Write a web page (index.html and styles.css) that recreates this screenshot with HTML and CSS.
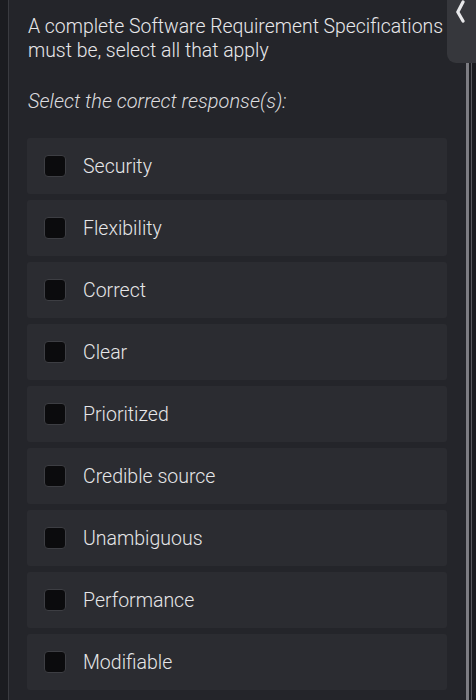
FILE: index.html
```html
<!DOCTYPE html>
<html>
<head>
<meta charset="utf-8">
<link rel="stylesheet" href="styles.css">
</head>
<body>
<div class="screen">
  <div class="edge-left"></div>
  <main class="panel">
    <p class="question">A complete Software Requirement Specifications must be, select all that apply</p>
    <p class="prompt">Select the correct response(s):</p>
    <ul class="options">
      <li class="option"><span class="box"></span><span class="label">Security</span></li>
      <li class="option"><span class="box"></span><span class="label">Flexibility</span></li>
      <li class="option"><span class="box"></span><span class="label">Correct</span></li>
      <li class="option"><span class="box"></span><span class="label">Clear</span></li>
      <li class="option"><span class="box"></span><span class="label">Prioritized</span></li>
      <li class="option"><span class="box"></span><span class="label">Credible source</span></li>
      <li class="option"><span class="box"></span><span class="label">Unambiguous</span></li>
      <li class="option"><span class="box"></span><span class="label">Performance</span></li>
      <li class="option"><span class="box"></span><span class="label">Modifiable</span></li>
    </ul>
  </main>
  <div class="edge-right">
    <div class="stripe-a"></div>
    <div class="stripe-gap"></div>
    <div class="stripe-b"></div>
  </div>
  <div class="tab">
    <svg class="chev" width="12" height="24" viewBox="0 0 12 24"><path d="M9 2 L3.8 12 L9 21" fill="none" stroke="#e8e8ea" stroke-width="3.2" stroke-linecap="round" stroke-linejoin="round"/></svg>
  </div>
</div>
</body>
</html>
```
FILE: styles.css
```css
* { box-sizing: border-box; }
html, body { margin: 0; padding: 0; }
body {
  width: 476px;
  height: 700px;
  overflow: hidden;
  background: #1a1b1f;
  font-family: Roboto, "Liberation Sans", sans-serif;
}
.screen {
  position: relative;
  display: flex;
  width: 476px;
  height: 700px;
}
.edge-left {
  width: 9px;
  flex: none;
  background: #1b1c20;
  border-right: 1px solid #3a3b40;
}
.panel {
  flex: 1;
  background: #24252a;
  padding: 15px 19px 0 18px;
}
.question {
  margin: 0 0 0 1px;
  font-size: 19.4px;
  font-weight: 300;
  line-height: 24px;
  color: #e8e8ea;
}
.prompt {
  margin: 26px 0 0 1px;
  font-size: 20px;
  font-weight: 300;
  line-height: 24px;
  font-style: italic;
  color: #dcdcdf;
}
.options {
  list-style: none;
  margin: 25px 0 0;
  padding: 0;
  display: flex;
  flex-direction: column;
  gap: 6px;
}
.option {
  height: 56px;
  background: #2b2c31;
  border-radius: 3px;
  display: flex;
  align-items: center;
  padding-left: 17px;
}
.box {
  width: 22px;
  height: 22px;
  flex: none;
  background: #0b0b0d;
  border: 1px solid #3d3e43;
  border-radius: 4px;
}
.label {
  margin-left: 17px;
  font-size: 19.5px;
  font-weight: 300;
  color: #e6e6e8;
}
.edge-right {
  width: 10px;
  flex: none;
  display: flex;
  background: #1a1b1f;
}
.stripe-a { width: 3px; background: #7d7d83; }
.stripe-gap { width: 2px; background: #1c1d21; }
.stripe-b { width: 1px; background: #55565b; }
.tab {
  position: absolute;
  top: 0;
  right: 0;
  width: 29px;
  height: 63px;
  background: #36373c;
  border-bottom-left-radius: 9px;
}
.chev {
  position: absolute;
  left: 7px;
  top: 0;
}
```
